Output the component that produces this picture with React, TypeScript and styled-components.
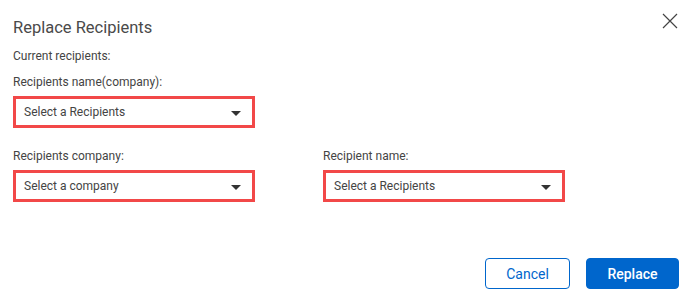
import React from 'react';
import styled, { createGlobalStyle } from 'styled-components';

const GlobalStyle = createGlobalStyle`
  html, body {
    margin: 0;
    padding: 0;
    background: #ffffff;
  }
  body {
    font-family: Roboto, "Liberation Sans", Arial, sans-serif;
    color: #444444;
  }
`;

const Dialog = styled.div`
  width: 694px;
  height: 303px;
  box-sizing: border-box;
  display: flex;
  flex-direction: column;
  background: #ffffff;
`;

const Header = styled.div`
  display: flex;
  justify-content: space-between;
  align-items: flex-start;
  padding: 13px 16px 0 13px;
`;

const Title = styled.h2`
  margin: 5px 0 0 0;
  font-size: 16.5px;
  line-height: 20px;
  font-weight: 400;
  color: #4a4a4a;
`;

const CloseButton = styled.button`
  width: 16px;
  height: 16px;
  padding: 0;
  border: none;
  background: transparent;
  cursor: pointer;
  display: flex;
  color: #444444;
`;

const Body = styled.div`
  padding: 10px 0 0 13px;
  flex: 1;
`;

const Text = styled.div<{ $gap?: number }>`
  font-size: 12px;
  line-height: 16px;
  color: #444444;
  margin-top: ${p => p.$gap ?? 0}px;
`;

const Field = styled.div<{ $gap?: number }>`
  display: flex;
  flex-direction: column;
  margin-top: ${p => p.$gap ?? 0}px;
`;

const FieldRow = styled.div`
  display: grid;
  grid-template-columns: 242px 242px;
  column-gap: 68px;
  margin-top: 20px;
`;

const Select = styled.div`
  margin-top: 6px;
  width: 242px;
  height: 32px;
  box-sizing: border-box;
  border: 3px solid #f24848;
  display: flex;
  align-items: center;
  justify-content: space-between;
  padding: 0 11px 0 8px;
  font-size: 12px;
  color: #444444;
  cursor: pointer;
`;

const Caret = styled.span`
  width: 0;
  height: 0;
  margin-top: 2px;
  border-left: 5px solid transparent;
  border-right: 5px solid transparent;
  border-top: 5px solid #333333;
`;

const Footer = styled.div`
  display: flex;
  justify-content: flex-end;
  gap: 16px;
  padding: 0 15px 14px 0;
`;

const Button = styled.button<{ $primary?: boolean }>`
  height: 31px;
  box-sizing: border-box;
  border-radius: 4px;
  font-family: Roboto, "Liberation Sans", Arial, sans-serif;
  font-size: 14px;
  cursor: pointer;
  border: 1px solid #0066cc;
  padding: 0;
  width: ${p => (p.$primary ? 93 : 85)}px;
  background: ${p => (p.$primary ? '#0066cc' : '#ffffff')};
  color: ${p => (p.$primary ? '#ffffff' : '#0066cc')};
  font-weight: ${p => (p.$primary ? 500 : 400)};
`;

function SelectBox({ placeholder }: { placeholder: string }) {
  return (
    <Select>
      <span>{placeholder}</span>
      <Caret />
    </Select>
  );
}

export default function App() {
  return (
    <>
      <GlobalStyle />
      <Dialog>
        <Header>
          <Title>Replace Recipients</Title>
          <CloseButton aria-label="Close">
            <svg width="16" height="16" viewBox="0 0 16 16">
              <path d="M1 1 L15 15 M15 1 L1 15" stroke="currentColor" strokeWidth="1.2" fill="none" />
            </svg>
          </CloseButton>
        </Header>
        <Body>
          <Text>Current recipients:</Text>
          <Field $gap={10}>
            <Text>Recipients name(company):</Text>
            <SelectBox placeholder="Select a Recipients" />
          </Field>
          <FieldRow>
            <Field>
              <Text>Recipients company:</Text>
              <SelectBox placeholder="Select a company" />
            </Field>
            <Field>
              <Text>Recipient name:</Text>
              <SelectBox placeholder="Select a Recipients" />
            </Field>
          </FieldRow>
        </Body>
        <Footer>
          <Button>Cancel</Button>
          <Button $primary>Replace</Button>
        </Footer>
      </Dialog>
    </>
  );
}
